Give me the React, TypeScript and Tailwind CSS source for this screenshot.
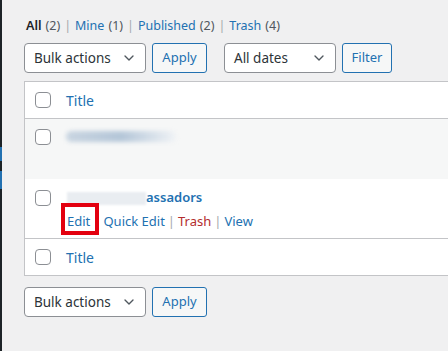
import { ChevronDown } from "lucide-react";

const font = { fontFamily: '"Noto Sans", "Open Sans", sans-serif' };

const Checkbox = () => (
  <span className="block h-4 w-4 rounded-[4px] border border-[#8c8f94] bg-white"></span>
);

const Select = ({ label, width }: { label: string; width: string }) => (
  <div
    className={`flex h-[30px] ${width} items-center justify-between rounded-[4px] border border-[#8c8f94] bg-white pl-[9px] pr-[8px] text-[13.5px] text-[#2c3338]`}
  >
    <span>{label}</span>
    <ChevronDown size={16} strokeWidth={2} className="text-[#50575e]" />
  </div>
);

const Button = ({ label, width }: { label: string; width: string }) => (
  <div
    className={`flex h-[30px] ${width} items-center justify-center rounded-[3px] border border-[#2271b1] bg-[#f6f7f7] text-[13px] text-[#2271b1]`}
  >
    {label}
  </div>
);

const Sep = ({ gap = "mx-[4px]" }: { gap?: string }) => (
  <span className={`${gap} text-[#a7aaad]`}>|</span>
);

const App = () => {
  return (
    <div
      className="flex h-[351px] w-[448px] overflow-hidden bg-[#f0f0f1]"
      style={font}
    >
      {/* admin menu edge */}
      <div className="flex w-[2px] shrink-0 flex-col bg-[#1d2327]">
        <div className="h-[147px]"></div>
        <div className="h-[14px] bg-[#2271b1]"></div>
        <div className="h-[10px]"></div>
        <div className="h-[18px] bg-[#2271b1]"></div>
      </div>

      <div className="flex min-w-0 flex-1 flex-col pl-[22px]">
        {/* status links */}
        <div className="mt-[16px] flex h-[20px] items-center whitespace-nowrap pl-[2px] text-[12.5px] text-[#50575e]">
          <span className="font-semibold text-[#1d2327]">All</span>
          <span className="ml-1">(2)</span>
          <Sep />
          <span className="text-[#2271b1]">Mine</span>
          <span className="ml-1">(1)</span>
          <Sep />
          <span className="text-[#2271b1]">Published</span>
          <span className="ml-1">(2)</span>
          <Sep />
          <span className="text-[#2271b1]">Trash</span>
          <span className="ml-1">(4)</span>
        </div>

        {/* top tablenav */}
        <div className="mt-[7px] flex items-center">
          <Select label="Bulk actions" width="w-[122px]" />
          <div className="ml-[6px]">
            <Button label="Apply" width="w-[55px]" />
          </div>
          <div className="ml-[17px]">
            <Select label="All dates" width="w-[112px]" />
          </div>
          <div className="ml-[6px]">
            <Button label="Filter" width="w-[50px]" />
          </div>
        </div>

        {/* posts table */}
        <div className="mt-[8px] w-[440px] border border-[#c3c4c7] bg-white text-[14px]">
          <div className="flex h-[37px] items-center border-b border-[#c3c4c7] pl-[10px]">
            <Checkbox />
            <span className="ml-[15px] text-[#2271b1]">Title</span>
          </div>

          <div className="flex h-[60px] items-start bg-[#f6f7f7] pl-[10px] pt-[10px]">
            <Checkbox />
            <div className="ml-[15px] mt-[2px] h-[11px] w-[110px] rounded-full bg-gradient-to-r from-[#c9d5e1] via-[#b4c6d8] to-[#f0f3f6] blur-[2px]"></div>
          </div>

          <div className="flex h-[59px] items-start pl-[10px] pt-[11px]">
            <Checkbox />
            <div className="ml-[16px] flex flex-col">
              <div className="flex h-[16px] items-center">
                <div className="h-[13px] w-[79px] bg-[#e9edf1] blur-[1px]"></div>
                <span className="text-[13px] font-semibold text-[#2271b1]">
                  assadors
                </span>
              </div>
              <div className="relative mt-[6px] flex items-center text-[13px] text-[#2271b1]">
                <span>Edit</span>
                <Sep gap="mx-[3px]" />
                <span>Quick Edit</span>
                <Sep gap="mx-[3px]" />
                <span className="text-[#b32d2e]">Trash</span>
                <Sep gap="mx-[3px]" />
                <span>View</span>
                <div className="absolute left-[-6px] top-[-9px] h-[32px] w-[38px] border-[4px] border-[#e3000f]"></div>
              </div>
            </div>
          </div>

          <div className="flex h-[37px] items-center border-t border-[#c3c4c7] pl-[10px]">
            <Checkbox />
            <span className="ml-[15px] text-[#2271b1]">Title</span>
          </div>
        </div>

        {/* bottom tablenav */}
        <div className="mt-[11px] flex items-center">
          <Select label="Bulk actions" width="w-[122px]" />
          <div className="ml-[6px]">
            <Button label="Apply" width="w-[55px]" />
          </div>
        </div>
      </div>
    </div>
  );
};

export default App;
